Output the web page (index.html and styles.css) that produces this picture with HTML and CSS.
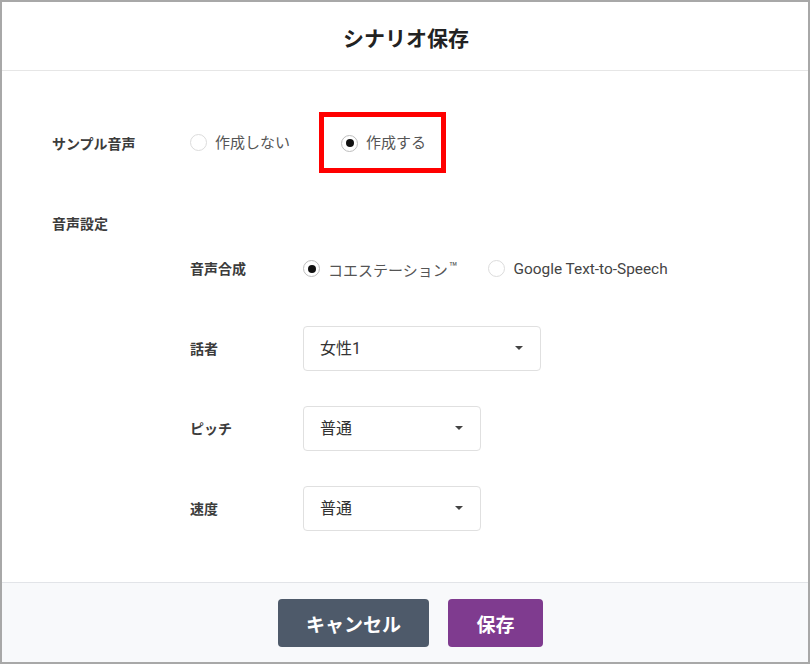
FILE: index.html
```html
<!DOCTYPE html>
<html lang="ja">
<head>
    <meta charset="UTF-8">
    <meta name="viewport" content="width=device-width, initial-scale=1.0">
    <title>シナリオ保存</title>
    <link rel="stylesheet" href="styles.css">
</head>
<body>

    <div class="dialog">
        <div class="dialog-header">
            <h2>シナリオ保存</h2>
        </div>

        <div class="dialog-body">
            <div class="row row-sample">
                <div class="label">サンプル音声</div>
                <div class="options">
                    <label class="radio">
                        <span class="radio-mark"></span>
                        <span>作成しない</span>
                    </label>
                    <label class="radio radio-highlight">
                        <span class="radio-mark checked"></span>
                        <span>作成する</span>
                    </label>
                </div>
            </div>

            <div class="section-label label">音声設定</div>

            <div class="sub-settings">
                <div class="sub-row">
                    <div class="label sub-label">音声合成</div>
                    <div class="options">
                        <label class="radio">
                            <span class="radio-mark checked"></span>
                            <span>コエステーション<span class="tm">™</span></span>
                        </label>
                        <label class="radio radio-google">
                            <span class="radio-mark"></span>
                            <span>Google Text-to-Speech</span>
                        </label>
                    </div>
                </div>

                <div class="sub-row">
                    <div class="label sub-label">話者</div>
                    <div class="select select-wide">
                        <span>女性1</span>
                        <span class="caret"></span>
                    </div>
                </div>

                <div class="sub-row">
                    <div class="label sub-label">ピッチ</div>
                    <div class="select">
                        <span>普通</span>
                        <span class="caret"></span>
                    </div>
                </div>

                <div class="sub-row">
                    <div class="label sub-label">速度</div>
                    <div class="select">
                        <span>普通</span>
                        <span class="caret"></span>
                    </div>
                </div>
            </div>
        </div>

        <div class="dialog-footer">
            <button class="btn btn-cancel">キャンセル</button>
            <button class="btn btn-save">保存</button>
        </div>
    </div>

</body>
</html>
```

FILE: styles.css
```css
* {
    box-sizing: border-box;
}

body {
    margin: 0;
    background-color: #ffffff;
    font-family: Roboto, "Noto Sans CJK JP", sans-serif;
    color: #333;
}

.dialog {
    width: 810px;
    height: 664px;
    border: 2px solid #a8a8a8;
    display: flex;
    flex-direction: column;
    background-color: #fff;
}

.dialog-header {
    height: 69px;
    border-bottom: 1px solid #e6e6e6;
    display: flex;
    align-items: center;
    justify-content: center;
}

.dialog-header h2 {
    margin: 0;
    font-size: 21px;
    font-weight: bold;
    color: #222;
    padding-left: 2px;
    padding-top: 1px;
}

.dialog-body {
    flex: 1;
    padding: 41px 0 0 50px;
}

.row {
    display: flex;
    align-items: center;
}

.label {
    font-size: 14px;
    font-weight: bold;
    color: #3c3c3c;
    line-height: 20px;
}

.row-sample .label {
    width: 138px;
    padding-top: 2px;
}

.options {
    display: flex;
    align-items: center;
}

.radio {
    display: flex;
    align-items: center;
    font-size: 15px;
    color: #555;
    line-height: 22px;
    gap: 8px;
}

.radio-mark {
    width: 17px;
    height: 17px;
    border: 1px solid #dcdcdc;
    border-radius: 50%;
    display: flex;
    align-items: center;
    justify-content: center;
    background: #fff;
}

.radio-mark.checked {
    border-color: #bdbdbd;
}

.radio-mark.checked::after {
    content: "";
    width: 8px;
    height: 8px;
    border-radius: 50%;
    background: #111;
}

/* highlight around the selected option */
.radio-highlight {
    margin-left: 29px;
    border: 5px solid #ff0000;
    padding: 15px 15px 14px 17px;
}

.section-label {
    margin-top: 41px;
}

.sub-settings {
    padding-left: 138px;
    margin-top: 12px;
}

.sub-row {
    display: flex;
    align-items: center;
    height: 45px;
    margin-bottom: 35px;
}

.sub-label {
    width: 113px;
    padding-top: 0;
}

.radio-google {
    margin-left: 31px;
    color: #444;
    font-size: 15.4px;
}

.tm {
    font-size: 14px;
    vertical-align: 4px;
    margin-left: 1px;
}

.select {
    width: 178px;
    height: 45px;
    border: 1px solid #e0e0e0;
    border-radius: 4px;
    display: flex;
    align-items: center;
    justify-content: space-between;
    padding: 0 17px 4px 16px;
    font-size: 16px;
    color: #333;
}

.select-wide {
    width: 238px;
}

.caret {
    width: 0;
    height: 0;
    border-left: 4px solid transparent;
    border-right: 4px solid transparent;
    border-top: 4px solid #444;
    margin-top: 3px;
}

.dialog-footer {
    height: 80px;
    border-top: 1px solid #e2e4e8;
    background-color: #f8f9fb;
    display: flex;
    justify-content: center;
    align-items: flex-start;
    padding-top: 16px;
    padding-left: 11px;
    gap: 19px;
}

.btn {
    height: 48px;
    border: none;
    border-radius: 4px;
    color: white;
    font-family: Roboto, "Noto Sans CJK JP", sans-serif;
    font-size: 19px;
    font-weight: bold;
    cursor: pointer;
}

.btn-cancel {
    width: 151px;
    background-color: #4e5a6a;
}

.btn-save {
    width: 95px;
    background-color: #7f3b8f;
}
```
